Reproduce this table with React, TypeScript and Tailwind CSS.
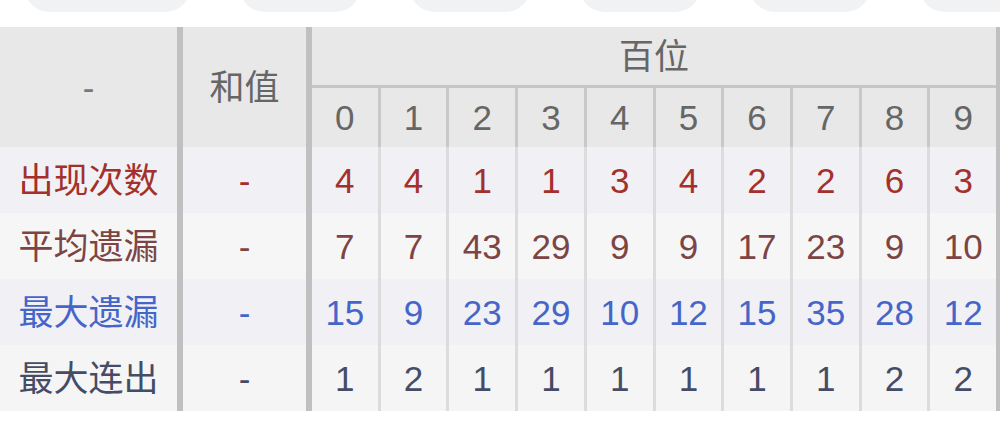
import React from "react";

const rows = [
  { label: "出现次数", color: "text-[#a3302b]", bg: "bg-[#f1f1f5]", vals: [4, 4, 1, 1, 3, 4, 2, 2, 6, 3] },
  { label: "平均遗漏", color: "text-[#7d4444]", bg: "bg-[#f6f6f7]", vals: [7, 7, 43, 29, 9, 9, 17, 23, 9, 10] },
  { label: "最大遗漏", color: "text-[#4566c8]", bg: "bg-[#f1f1f5]", vals: [15, 9, 23, 29, 10, 12, 15, 35, 28, 12] },
  { label: "最大连出", color: "text-[#454c65]", bg: "bg-[#f5f5f6]", vals: [1, 2, 1, 1, 1, 1, 1, 1, 2, 2] },
];

const pills = [167, 122, 122, 122, 122, 122];

export default function App() {
  return (
    <div
      className="w-[1000px] h-[429px] bg-white overflow-hidden"
      style={{ fontFamily: '"Liberation Sans", "Noto Sans CJK SC", sans-serif' }}
    >
      {/* top pill bar, cut off */}
      <div className="h-[12px] overflow-hidden flex items-end gap-[48px] pl-[24px]">
        {pills.map((w, i) => (
          <div key={i} className="h-[52px] shrink-0 rounded-[26px] bg-[#f1f2f4]" style={{ width: w }} />
        ))}
      </div>

      <div className="mt-[15px] border-r-[4px] border-[#c0c0c0] text-[35px] leading-none">
        {/* header */}
        <div className="flex h-[120px] bg-[#e8e8e8] text-[#666666]">
          <div className="w-[183px] shrink-0 border-r-[6px] border-[#c0c0c0] flex items-center justify-center text-[#777777]">
            -
          </div>
          <div className="w-[129px] shrink-0 border-r-[6px] border-[#c0c0c0] flex items-center justify-center">
            和值
          </div>
          <div className="flex-1 flex flex-col">
            <div className="h-[61px] border-b-[3px] border-[#c6c6c6] flex items-center justify-center pt-[1px]">
              百位
            </div>
            <div className="flex-1 flex">
              {Array.from({ length: 10 }).map((_, i) => (
                <div
                  key={i}
                  className={`flex-1 flex items-center justify-center ${i < 9 ? "border-r-[3px] border-[#c8c8c8]" : ""}`}
                >
                  {i}
                </div>
              ))}
            </div>
          </div>
        </div>

        {/* data rows */}
        {rows.map((r) => (
          <div key={r.label} className={`flex h-[66px] ${r.bg} ${r.color}`}>
            <div className="w-[183px] shrink-0 border-r-[6px] border-[#c0c0c0] flex items-center justify-center">
              {r.label}
            </div>
            <div className="w-[129px] shrink-0 border-r-[6px] border-[#c0c0c0] flex items-center justify-center">
              -
            </div>
            <div className="flex-1 flex">
              {r.vals.map((v, i) => (
                <div
                  key={i}
                  className={`flex-1 flex items-center justify-center ${i < 9 ? "border-r-[3px] border-[#dcdcdc]" : ""}`}
                >
                  {v}
                </div>
              ))}
            </div>
          </div>
        ))}
      </div>
    </div>
  );
}
